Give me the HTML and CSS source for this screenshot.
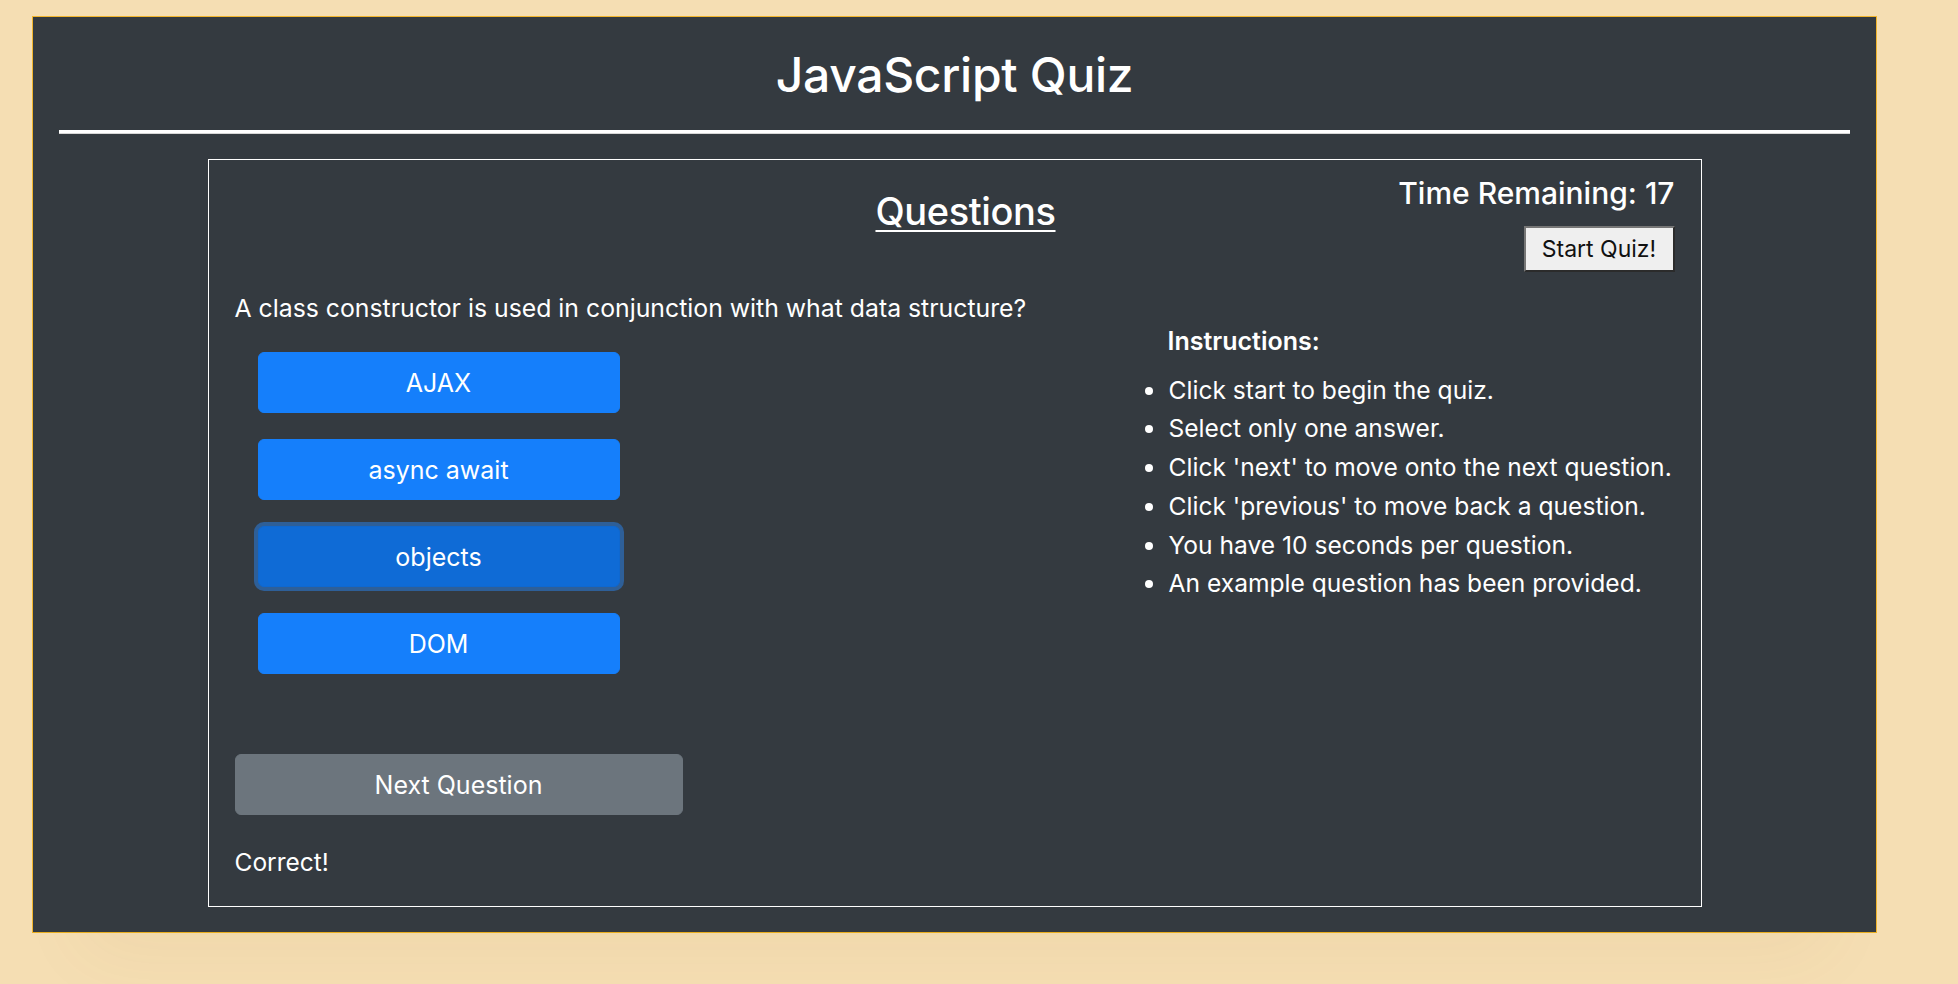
FILE: index.html
```html
<!DOCTYPE html>
<html lang="en">
<head>
<meta charset="utf-8">
<title>JavaScript Quiz</title>
<link rel="stylesheet" href="styles.css">
</head>
<body>
<main class="app">
  <h1 class="title">JavaScript Quiz</h1>
  <hr class="rule">
  <section class="quiz">
    <div class="top-row">
      <div class="spacer"></div>
      <h2 class="questions-heading">Questions</h2>
      <div class="timer-box">
        <h4 class="timer">Time Remaining: 17</h4>
        <button class="start-btn" type="button">Start Quiz!</button>
      </div>
    </div>
    <div class="content-row">
      <div class="question-col">
        <p class="question">A class constructor is used in conjunction with what data structure?</p>
        <div class="answers">
          <button class="answer" type="button">AJAX</button>
          <button class="answer" type="button">async await</button>
          <button class="answer answer-focus" type="button">objects</button>
          <button class="answer" type="button">DOM</button>
        </div>
        <button class="next-btn" type="button">Next Question</button>
        <p class="result">Correct!</p>
      </div>
      <div class="instructions-col">
        <h5 class="instructions-title">Instructions:</h5>
        <ul class="instructions">
          <li>Click start to begin the quiz.</li>
          <li>Select only one answer.</li>
          <li>Click 'next' to move onto the next question.</li>
          <li>Click 'previous' to move back a question.</li>
          <li>You have 10 seconds per question.</li>
          <li>An example question has been provided.</li>
        </ul>
      </div>
    </div>
  </section>
</main>
</body>
</html>
```

FILE: styles.css
```css
* { box-sizing: border-box; }

html, body {
  margin: 0;
  padding: 0;
}

body {
  background: #f5deb3;
  font-family: Inter, "Noto Sans", "Liberation Sans", sans-serif;
  color: #fff;
  width: 1958px;
  height: 984px;
  overflow: hidden;
}

.app {
  margin: 16px 0 0 32px;
  width: 1845px;
  height: 917px;
  background: #343a40;
  border: 1px solid #f2b52c;
  border-bottom-color: #e9ad1e;
  padding: 0 26px;
  box-shadow: 0 70px 70px -50px rgba(140, 90, 0, 0.05);
}

.title {
  margin: 0;
  padding-top: 28px;
  font-size: 48px;
  font-weight: 500;
  letter-spacing: -0.3px;
  line-height: 60px;
  text-align: center;
}

.rule {
  margin: 25px 0 0;
  height: 4px;
  border: 0;
  border-top: 3px solid #fff;
  border-bottom: 1px solid #d6d6d6;
}

.quiz {
  width: 1494px;
  height: 748px;
  margin: 25px auto 0;
  border: 1px solid #fff;
  padding: 15px 26px 0;
}

.top-row {
  display: grid;
  grid-template-columns: 1fr auto 1fr;
  align-items: start;
}

.questions-heading {
  margin: 0;
  padding: 12px 0 0 22px;
  font-size: 38px;
  font-weight: 500;
  letter-spacing: -0.4px;
  line-height: 48px;
  text-decoration: underline;
  text-decoration-thickness: 2px;
  text-underline-offset: 5px;
}

.timer-box {
  display: flex;
  flex-direction: column;
  align-items: flex-end;
}

.timer {
  margin: 0;
  font-size: 30px;
  font-weight: 500;
  line-height: 36px;
  white-space: nowrap;
}

.start-btn {
  margin-top: 15px;
  min-width: 151px;
  height: 46px;
  padding: 0 10px;
  font-family: inherit;
  font-size: 23px;
  color: #111;
  background: #efefef;
  border: 2px solid;
  border-color: #767676 #2b2b2b #2b2b2b #767676;
  border-radius: 0;
}

.content-row {
  display: flex;
  margin-top: 18px;
}

.question-col {
  flex: 1;
}

.question {
  margin: 0;
  font-size: 24.8px;
  line-height: 36px;
  white-space: nowrap;
}

.answers {
  display: flex;
  flex-direction: column;
  gap: 26px;
  margin: 26px 0 0 23px;
}

.answer {
  width: 362px;
  height: 61px;
  font-family: inherit;
  font-size: 25px;
  color: #fff;
  background: #157ffb;
  border: 1px solid #157ffb;
  border-radius: 6px;
}

.answer-focus {
  background: #0f6bd6;
  border-color: #0f68d0;
  box-shadow: 0 0 0 4px #2e5f98;
}

.next-btn {
  display: block;
  margin-top: 80px;
  width: 448px;
  height: 61px;
  font-family: inherit;
  font-size: 25px;
  color: #fff;
  background: #6c757d;
  border: 1px solid #6c757d;
  border-radius: 6px;
}

.result {
  margin: 29px 0 0;
  font-size: 24.5px;
  line-height: 36px;
}

.instructions-col {
  flex: 0 0 557px;
  padding-top: 33px;
}

.instructions-title {
  margin: 0;
  padding-left: 50px;
  font-size: 25px;
  font-weight: 600;
  line-height: 37.5px;
}

.instructions {
  margin: 10px 0 0;
  padding-left: 50px;
  font-size: 24.6px;
  line-height: 38.8px;
}

.instructions li {
  padding-left: 1px;
  white-space: nowrap;
}
```
